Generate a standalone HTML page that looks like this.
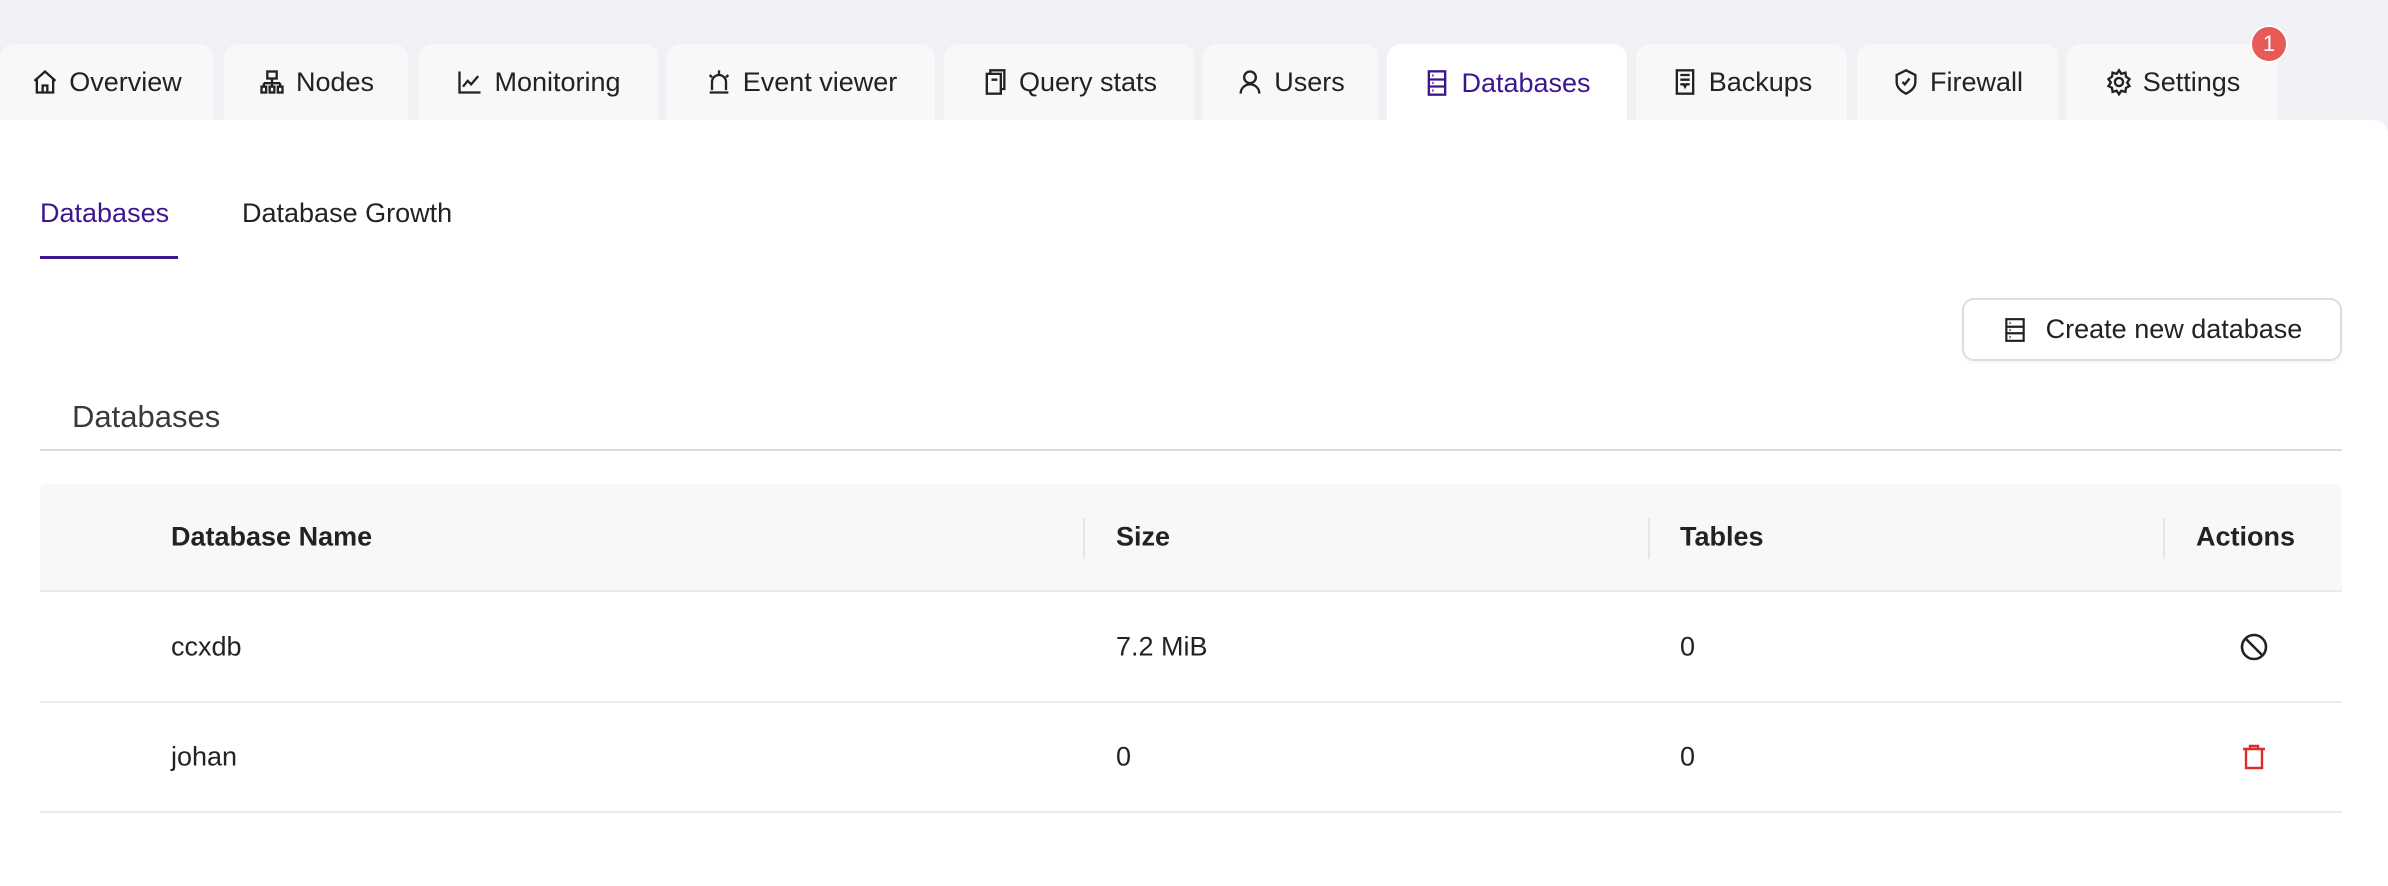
<!DOCTYPE html>
<html><head><meta charset="utf-8"><style>
*{margin:0;padding:0;box-sizing:border-box}
body{width:2388px;height:886px;background:#f0f1f4;font-family:"Liberation Sans",sans-serif;color:#222;position:relative;overflow:hidden}
.tab{position:absolute;top:44px;height:76px;background:#f8f8f8;border-radius:14px 14px 0 0;display:flex;align-items:center;justify-content:center;font-size:27px;color:#222;gap:10px}
.tab svg{width:28px;height:28px;fill:none;stroke:#222;stroke-width:2}
.tab.act{background:#fff;color:#3d1590;height:78px}
.tab.act svg{stroke:#3d1590}
.panel{position:absolute;top:120px;left:0;width:2388px;height:766px;background:#fff;border-radius:0 14px 0 0}
.abs{position:absolute}
.th{position:absolute;top:537px;transform:translateY(-50%);font-size:27px;font-weight:bold;color:#222}
.sep{position:absolute;top:518px;width:2px;height:41px;background:#e6e6e6}
.td{position:absolute;font-size:27px;color:#222;transform:translateY(-50%)}
</style></head><body>
<div class="tab" style="left:0;width:213px"><svg viewBox="0 0 24 24"><path d="M3 11L12 3l9 8M5 9v12h14V9M10 21v-6h4v6"/></svg>Overview</div>
<div class="tab" style="left:224px;width:184px"><svg viewBox="0 0 24 24"><rect x="8" y="3" width="8" height="6"/><path d="M12 9v4M5 13h14M5 13v3M12 13v3M19 13v3"/><rect x="3" y="16" width="4" height="5"/><rect x="10" y="16" width="4" height="5"/><rect x="17" y="16" width="4" height="5"/></svg>Nodes</div>
<div class="tab" style="left:419px;width:239px"><svg viewBox="0 0 24 24"><path d="M3 3v18h18M6 16l4-5 3 3 6-7"/></svg>Monitoring</div>
<div class="tab" style="left:667px;width:268px"><svg viewBox="0 0 24 24"><path d="M6 19v-7a6 6 0 0112 0v7M4 21h16M12 2v3M4 6l2 2M20 6l-2 2"/></svg>Event viewer</div>
<div class="tab" style="left:944px;width:250px"><svg viewBox="0 0 24 24"><rect x="5" y="5" width="12" height="17"/><path d="M8 5V2h12v16h-3M9 10h5"/></svg>Query stats</div>
<div class="tab" style="left:1203px;width:175px"><svg viewBox="0 0 24 24"><circle cx="12" cy="8" r="5"/><path d="M4 22c0-5 4-8 8-8s8 3 8 8"/></svg>Users</div>
<div class="tab act" style="left:1387px;width:240px"><svg viewBox="0 0 24 24"><rect x="5" y="2" width="14" height="20"/><path d="M5 9h14M5 15h14M8 5.5h1M8 12h1M8 18.5h1"/></svg>Databases</div>
<div class="tab" style="left:1636px;width:211px"><svg viewBox="0 0 24 24"><rect x="5" y="2" width="14" height="20"/><path d="M8 6h8M8 10h8M8 14h3l1 2 1-2h3"/></svg>Backups</div>
<div class="tab" style="left:1857px;width:201px"><svg viewBox="0 0 24 24"><path d="M12 2l8 4v6c0 5-4 8-8 10-4-2-8-5-8-10V6z"/><path d="M9 12l2 2 4-5"/></svg>Firewall</div>
<div class="tab" style="left:2067px;width:211px"><svg viewBox="0 0 24 24"><circle cx="12" cy="12" r="3.5"/><path d="M12 2l2 3 3.5-1 .5 3.5 3 2-2 3 2 3-3 1.5-.5 3.5-3.5-1-2 3-2-3-3.5 1-.5-3.5-3-1.5 2-3-2-3 3-2L6.5 4 10 5z"/></svg>Settings</div>
<div class="abs" style="left:2250px;top:25px;width:38px;height:38px;border-radius:50%;background:#e85a57;border:2px solid #fff;color:#fff;font-size:22px;display:flex;align-items:center;justify-content:center">1</div>
<div class="panel"></div>
<div class="abs" style="left:40px;top:198px;font-size:27px;color:#3d1590">Databases</div>
<div class="abs" style="left:40px;top:256px;width:138px;height:3px;background:#3d1590"></div>
<div class="abs" style="left:242px;top:198px;font-size:27px;color:#222">Database Growth</div>
<div class="abs" style="left:1962px;top:298px;width:380px;height:63px;border:2px solid #ddd;border-radius:12px;display:flex;align-items:center;justify-content:center;gap:18px;font-size:27px;color:#222;box-shadow:0 2px 3px rgba(0,0,0,.04)"><svg viewBox="0 0 24 24" width="26" height="28" fill="none" stroke="#222" stroke-width="2"><rect x="4" y="2" width="16" height="20"/><path d="M4 9h16M4 15h16M7 5.5h1M7 12h1M7 18.5h1"/></svg>Create new database</div>
<div class="abs" style="left:72px;top:399px;font-size:31px;color:#3a3a3a">Databases</div>
<div class="abs" style="left:40px;top:449px;width:2302px;height:2px;background:#ddd"></div>
<div class="abs" style="left:40px;top:484px;width:2302px;height:108px;background:#f8f8f8;border-radius:6px 6px 0 0;border-bottom:2px solid #ebebeb"></div>
<div class="th" style="left:171px">Database Name</div>
<div class="th" style="left:1116px">Size</div>
<div class="th" style="left:1680px">Tables</div>
<div class="th" style="left:2196px">Actions</div>
<div class="sep" style="left:1083px"></div><div class="sep" style="left:1648px"></div><div class="sep" style="left:2163px"></div>
<div class="td" style="left:171px;top:647px">ccxdb</div>
<div class="td" style="left:1116px;top:647px">7.2 MiB</div>
<div class="td" style="left:1680px;top:647px">0</div>
<svg class="abs" style="left:2240px;top:633px" width="28" height="28" viewBox="0 0 28 28" fill="none" stroke="#222" stroke-width="2.6"><circle cx="14" cy="14" r="12"/><path d="M6 6l16 16"/></svg>
<div class="abs" style="left:40px;top:701px;width:2302px;height:2px;background:#ebebeb"></div>
<div class="td" style="left:171px;top:757px">johan</div>
<div class="td" style="left:1116px;top:757px">0</div>
<div class="td" style="left:1680px;top:757px">0</div>
<svg class="abs" style="left:2242px;top:744px" width="24" height="26" viewBox="0 0 24 26" fill="none" stroke="#e02b2b" stroke-width="2.4"><path d="M1 5h22M8 5V2h8v3M4 5v19h16V5"/></svg>
<div class="abs" style="left:40px;top:811px;width:2302px;height:2px;background:#ebebeb"></div>
</body></html>
